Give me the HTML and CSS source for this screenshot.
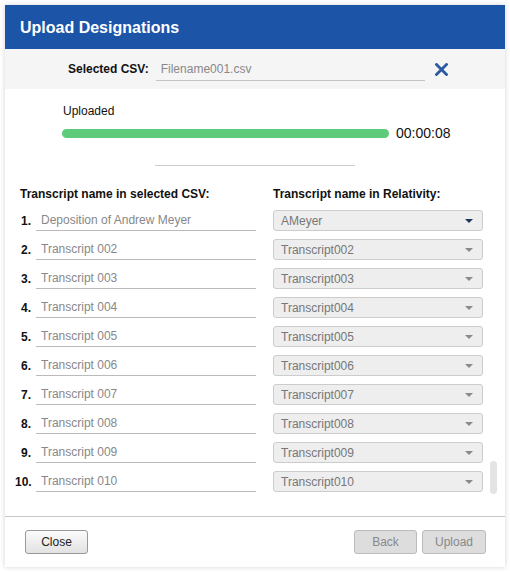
FILE: index.html
```html
<!DOCTYPE html>
<html lang="en">
<head>
    <meta charset="UTF-8">
    <title>Upload Designations</title>
    <link rel="stylesheet" href="styles.css">
</head>
<body>

<div class="dialog">
    <div class="dialog-header">Upload Designations</div>

    <div class="csv-bar">
        <span class="csv-label">Selected CSV:</span>
        <div class="csv-input">Filename001.csv</div>
        <svg class="csv-clear" width="13" height="13" viewBox="0 0 13 13">
            <path d="M1.5 1.5 L11.5 11.5 M11.5 1.5 L1.5 11.5" stroke="#2b5aa0" stroke-width="2.8" stroke-linecap="square" fill="none"/>
        </svg>
    </div>

    <div class="content">
        <div class="upload-status">
            <div class="upload-label">Uploaded</div>
            <div class="progress-row">
                <div class="progress"><div class="progress-fill"></div></div>
                <span class="progress-time">00:00:08</span>
            </div>
        </div>

        <div class="divider"></div>

        <div class="headings">
            <span class="heading-left">Transcript name in selected CSV:</span>
            <span class="heading-right">Transcript name in Relativity:</span>
        </div>

        <div class="list-wrap">
            <div class="list">
                <div class="row">
                    <span class="num">1.</span>
                    <div class="name-input">Deposition of Andrew Meyer</div>
                    <div class="select"><span>AMeyer</span><span class="arrow arrow-dark"></span></div>
                </div>
                <div class="row">
                    <span class="num">2.</span>
                    <div class="name-input">Transcript 002</div>
                    <div class="select"><span>Transcript002</span><span class="arrow"></span></div>
                </div>
                <div class="row">
                    <span class="num">3.</span>
                    <div class="name-input">Transcript 003</div>
                    <div class="select"><span>Transcript003</span><span class="arrow"></span></div>
                </div>
                <div class="row">
                    <span class="num">4.</span>
                    <div class="name-input">Transcript 004</div>
                    <div class="select"><span>Transcript004</span><span class="arrow"></span></div>
                </div>
                <div class="row">
                    <span class="num">5.</span>
                    <div class="name-input">Transcript 005</div>
                    <div class="select"><span>Transcript005</span><span class="arrow"></span></div>
                </div>
                <div class="row">
                    <span class="num">6.</span>
                    <div class="name-input">Transcript 006</div>
                    <div class="select"><span>Transcript006</span><span class="arrow"></span></div>
                </div>
                <div class="row">
                    <span class="num">7.</span>
                    <div class="name-input">Transcript 007</div>
                    <div class="select"><span>Transcript007</span><span class="arrow"></span></div>
                </div>
                <div class="row">
                    <span class="num">8.</span>
                    <div class="name-input">Transcript 008</div>
                    <div class="select"><span>Transcript008</span><span class="arrow"></span></div>
                </div>
                <div class="row">
                    <span class="num">9.</span>
                    <div class="name-input">Transcript 009</div>
                    <div class="select"><span>Transcript009</span><span class="arrow"></span></div>
                </div>
                <div class="row">
                    <span class="num">10.</span>
                    <div class="name-input">Transcript 010</div>
                    <div class="select"><span>Transcript010</span><span class="arrow"></span></div>
                </div>
            </div>
            <div class="scroll-track"><div class="scroll-thumb"></div></div>
        </div>
    </div>

    <div class="dialog-footer">
        <button type="button" class="btn">Close</button>
        <div class="footer-right">
            <button type="button" class="btn btn-disabled" disabled>Back</button>
            <button type="button" class="btn btn-disabled" disabled>Upload</button>
        </div>
    </div>
</div>

</body>
</html>
```

FILE: styles.css
```css
body {
    margin: 0;
    padding: 5px;
    background-color: #ffffff;
    font-family: "Liberation Sans", Arial, sans-serif;
    font-size: 12px;
    color: #111111;
}

.dialog {
    width: 500px;
    height: 562px;
    background-color: #ffffff;
    box-shadow: 0 0 5px rgba(0, 0, 0, 0.18);
    display: flex;
    flex-direction: column;
}

.dialog-header {
    height: 42px;
    padding-top: 2px;
    background-color: #1c54a8;
    color: #ffffff;
    font-size: 16px;
    font-weight: bold;
    padding-left: 15px;
    display: flex;
    align-items: center;
}

.csv-bar {
    height: 40px;
    background-color: #f5f5f5;
    display: flex;
    align-items: center;
    padding-left: 63px;
}

.csv-label {
    font-weight: bold;
    margin-right: 7px;
}

.csv-input {
    width: 264px;
    height: 21px;
    line-height: 21px;
    padding-left: 5px;
    border-bottom: 1px solid #c4c4c4;
    color: #888888;
    margin-top: 1px;
}

.csv-clear {
    margin-left: 10px;
}

.content {
    flex: 1;
}

.upload-status {
    padding-left: 57px;
    padding-top: 15px;
}

.upload-label {
    line-height: 14px;
    padding-left: 1px;
}

.progress-row {
    display: flex;
    align-items: center;
    height: 16px;
    margin-top: 7px;
}

.progress {
    width: 327px;
    height: 9px;
    border-radius: 5px;
    background-color: #e5e5e5;
    overflow: hidden;
}

.progress-fill {
    width: 100%;
    height: 100%;
    background-color: #5ecb7a;
}

.progress-time {
    font-size: 14px;
    margin-left: 7px;
}

.divider {
    width: 200px;
    height: 1px;
    background-color: #cccccc;
    margin: 24px 0 0 150px;
}

.headings {
    display: flex;
    font-weight: bold;
    line-height: 14px;
    margin-top: 21px;
    padding-left: 15px;
}

.heading-left {
    width: 253px;
}

.list-wrap {
    display: flex;
    margin-top: 9px;
    padding-left: 10px;
}

.row {
    display: flex;
    align-items: center;
    height: 21px;
    margin-bottom: 8px;
}

.row:last-child {
    margin-bottom: 0;
}

.num {
    width: 16px;
    text-align: right;
    font-weight: bold;
    margin-right: 5px;
}

.name-input {
    width: 215px;
    height: 20px;
    line-height: 21px;
    padding-left: 5px;
    border-bottom: 1px solid #bbbbbb;
    color: #888888;
}

.select {
    width: 192px;
    height: 17px;
    margin-left: 17px;
    padding: 2px 9px 0 7px;
    background-color: #eeeeee;
    border: 1px solid #cccccc;
    border-radius: 3px;
    color: #777777;
    display: flex;
    align-items: center;
    justify-content: space-between;
    line-height: 17px;
}

.arrow {
    width: 0;
    height: 0;
    border-left: 4.5px solid transparent;
    border-right: 4.5px solid transparent;
    border-top: 4px solid #8a8a8a;
    margin-bottom: 1px;
}

.arrow-dark {
    border-top-color: #1d3558;
}

.scroll-track {
    display: flex;
    align-items: flex-end;
    margin-left: 7px;
}

.scroll-thumb {
    width: 7px;
    height: 33px;
    border-radius: 4px;
    background-color: #e4e4e4;
    margin-bottom: -2px;
}

.dialog-footer {
    border-top: 1px solid #c8c8c8;
    padding: 13px 19px 13px 20px;
    display: flex;
    justify-content: space-between;
}

.footer-right {
    display: flex;
    gap: 5px;
}

.btn {
    height: 24px;
    width: 63px;
    font-family: "Liberation Sans", Arial, sans-serif;
    font-size: 12px;
    color: #222222;
    border: 1px solid #999999;
    border-radius: 3px;
    background: linear-gradient(#fbfbfb, #e2e2e2);
    padding: 0;
}

.btn-disabled {
    color: #888888;
    border-color: #bbbbbb;
    background: #dddddd;
}

.btn-disabled:last-child {
    width: 64px;
}
```
